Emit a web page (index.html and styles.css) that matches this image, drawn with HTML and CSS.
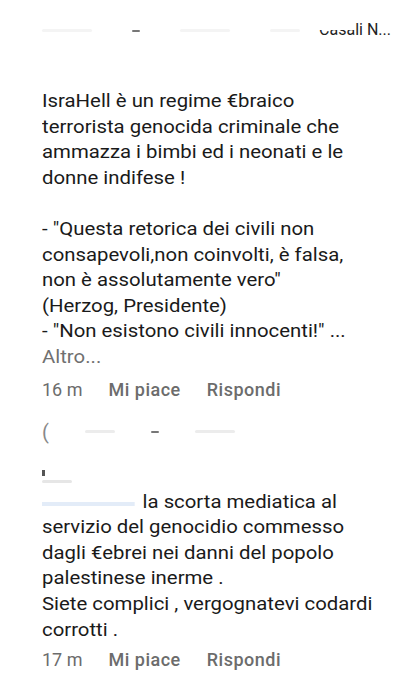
FILE: index.html
```html
<!DOCTYPE html>
<html lang="it">
<head>
    <meta charset="UTF-8">
    <meta name="viewport" content="width=device-width, initial-scale=1.0">
    <title>Commenti</title>
    <link rel="stylesheet" href="styles.css">
</head>
<body>

<div class="thread">
    <div class="top-row">
        <div class="smudge-row">
            <span class="smudge s1"></span>
            <span class="smudge dash"></span>
            <span class="smudge s2"></span>
            <span class="smudge s3"></span>
        </div>
        <span class="top-name">Casali N...</span>
    </div>

    <div class="comment first">
        <p class="text">IsraHell è un regime €braico<br>
        terrorista genocida criminale che<br>
        ammazza i bimbi ed i neonati e le<br>
        donne indifese !<br>
        <br>
        - "Questa retorica dei civili non<br>
        consapevoli,non coinvolti, è falsa,<br>
        non è assolutamente vero"<br>
        (Herzog, Presidente)<br>
        - "Non esistono civili innocenti!" ...</p>
        <p class="text more">Altro...</p>
        <div class="meta">
            <span>16 m</span>
            <span class="action">Mi piace</span>
            <span class="action">Rispondi</span>
        </div>
    </div>

    <div class="comment second">
        <div class="hidden-head">
            <span class="paren">(</span>
            <span class="smudge s4"></span>
            <span class="smudge dash"></span>
            <span class="smudge s5"></span>
        </div>
        <div class="hidden-tag">
            <span class="tick"></span>
            <span class="smudge s6"></span>
        </div>
        <p class="text"><span class="mention"></span>la scorta mediatica al<br>
        servizio del genocidio commesso<br>
        dagli €ebrei nei danni del popolo<br>
        palestinese inerme .<br>
        Siete complici , vergognatevi codardi<br>
        corrotti .</p>
        <div class="meta">
            <span>17 m</span>
            <span class="action">Mi piace</span>
            <span class="action">Rispondi</span>
        </div>
    </div>
</div>

</body>
</html>
```

FILE: styles.css
```css
body {
    margin: 0;
    background-color: #ffffff;
    font-family: Roboto, "Noto Sans", sans-serif;
    color: #1a1a1a;
}
.thread {
    width: 408px;
    height: 688px;
    overflow: hidden;
}
.top-row {
    display: flex;
    justify-content: space-between;
    align-items: flex-end;
    height: 40px;
    padding: 0 17px 0 42px;
}
.top-name {
    position: relative;
    font-size: 16px;
    line-height: 18px;
    margin-bottom: 1px;
    color: #222;
}
/* parte alta del nome coperta */
.top-name::before {
    content: "";
    position: absolute;
    left: -2px;
    top: 0;
    width: 38px;
    height: 9px;
    background-color: #fff;
}
.smudge-row {
    display: flex;
    gap: 40px;
    align-items: center;
    margin-bottom: 8px;
}
.smudge {
    display: inline-block;
    height: 3px;
    background-color: #f4f4f4;
    border-radius: 2px;
}
.smudge.dash {
    width: 8px;
    height: 2px;
    background-color: #777;
}
.s1 { width: 50px; }
.s2 { width: 50px; }
.s3 { width: 30px; }
.s4 { width: 30px; background-color: #ececec; }
.s5 { width: 40px; background-color: #ececec; }
.s6 { width: 30px; background-color: #e6e6e6; }
.comment {
    padding-left: 42px;
}
.first {
    padding-top: 48px;
}
.text {
    margin: 0;
    font-size: 18px;
    line-height: 25.6px;
    white-space: nowrap;
    transform: scaleX(1.13);
    transform-origin: left;
}
.more {
    color: #707070;
}
.meta {
    display: flex;
    gap: 26px;
    margin-top: 8px;
    font-size: 18px;
    line-height: 24px;
    color: #6c6c6c;
}
.action {
    font-weight: 500;
    letter-spacing: 0.5px;
}
.second {
    padding-top: 18px;
}
.hidden-head {
    display: flex;
    align-items: center;
    gap: 36px;
    height: 24px;
}
.paren {
    font-size: 20px;
    color: #888;
}
.hidden-tag {
    height: 45px;
    display: flex;
    flex-direction: column;
    justify-content: flex-end;
    gap: 4px;
    padding-bottom: 6px;
    box-sizing: border-box;
}
.tick {
    width: 3px;
    height: 6px;
    background-color: #555;
}
.mention {
    display: inline-block;
    width: 82px;
    height: 4px;
    margin-right: 7px;
    vertical-align: 2px;
    background-color: #e3ecf8;
}
.second .meta {
    margin-top: 6px;
}
```
